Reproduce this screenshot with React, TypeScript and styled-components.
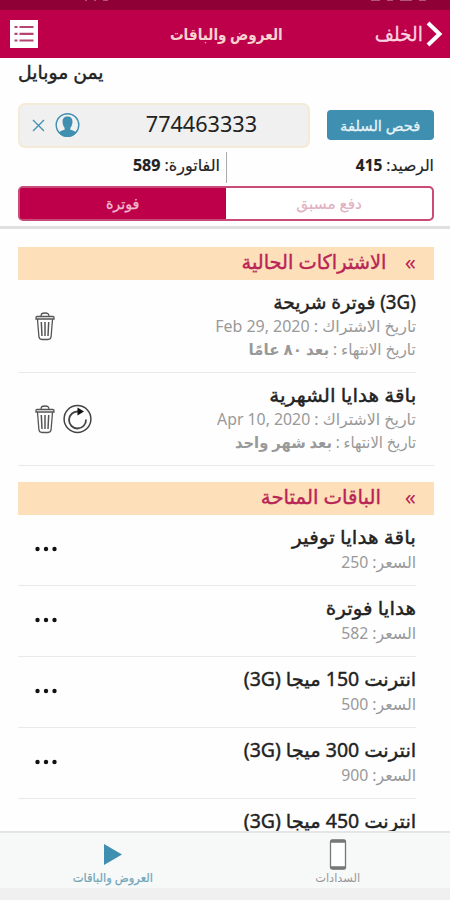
import React from "react";
import styled, { createGlobalStyle } from "styled-components";

const Global = createGlobalStyle`
  * { box-sizing: border-box; }
  body { margin: 0; background: #fff; overflow: hidden; }
  button { border: 0; padding: 0; background: none; font: inherit; color: inherit; }
`;

const crimson = "#be004b";
const blue = "#3f8fb0";

const Screen = styled.main`
  width: 450px;
  height: 900px;
  display: flex;
  flex-direction: column;
  overflow: hidden;
  background: #fefefe;
  color: #222;
  font-family: "Noto Sans", "DejaVu Sans", sans-serif;
`;

const Label = styled.span<{
  $size: number;
  $x?: number;
  $origin?: string;
  $color?: string;
  $bold?: boolean;
  $stroke?: number;
}>`
  display: inline-block;
  white-space: nowrap;
  font-size: ${(p) => p.$size}px;
  font-weight: ${(p) => (p.$bold ? 700 : 400)};
  color: ${(p) => p.$color ?? "inherit"};
  -webkit-text-stroke: ${(p) => p.$stroke ?? 0}px currentColor;
  transform: scaleX(${(p) => p.$x ?? 1});
  transform-origin: ${(p) => p.$origin ?? "right"};
`;

const StatusBar = styled.div`
  height: 10px;
  flex: none;
  background: #8f0037;
  direction: ltr;
  display: flex;
  justify-content: space-between;
  padding: 0 24px 0 85px;
`;
const Marks = styled.div`
  display: flex;
  gap: 7px;
`;
const Mark = styled.i<{ $w: number }>`
  width: ${(p) => p.$w}px;
  height: 1px;
  background: #b05580;
`;

const Header = styled.header`
  height: 48px;
  flex: none;
  display: grid;
  grid-template-columns: 1fr auto 1fr;
  align-items: center;
  padding: 0 7px 0 9px;
  background: ${crimson};
  color: #fff;
`;
const Back = styled.button`
  display: flex;
  align-items: center;
  gap: 3px;
  height: 30px;
  line-height: 30px;
`;
const MenuButton = styled.button`
  justify-self: end;
  width: 30px;
  height: 30px;
  display: flex;
`;

const Operator = styled.h1`
  margin: 0;
  height: 45px;
  flex: none;
  padding: 0 18px;
  direction: ltr;
  line-height: 28px;
  font-weight: 400;
  font-size: 16px;
`;
const SearchRow = styled.div`
  display: flex;
  justify-content: space-between;
  align-items: center;
  height: 45px;
  flex: none;
  padding: 0 16px 0 18px;
`;
const CheckButton = styled.button`
  width: 107px;
  height: 30px;
  margin-bottom: 1px;
  border-radius: 4px;
  background: ${blue};
  color: #e6f4f8;
  line-height: 27px;
  text-align: center;
`;
const NumberField = styled.div`
  width: 292px;
  height: 45px;
  direction: ltr;
  display: flex;
  align-items: center;
  padding: 0 51px 2px 11px;
  background: #f0f0f0;
  border: 2px solid #f5ead6;
  border-radius: 7px;
`;
const PhoneNumber = styled.span`
  margin-left: auto;
  line-height: 40px;
`;

const Balances = styled.div`
  display: flex;
  height: 38px;
  flex: none;
  padding: 4px 16px 3px 18px;
  line-height: 26px;
`;
const Balance = styled.div`
  width: 207px;
  &:last-child {
    width: 209px;
    border-right: 1px solid #aaa;
    padding-right: 6px;
  }
`;
const Tabs = styled.div`
  display: flex;
  height: 35px;
  flex: none;
  margin: 0 16px 5px 18px;
  border: 2px solid #c94b78;
  border-radius: 5px;
  overflow: hidden;
  background: ${crimson};
`;
const Tab = styled.button<{ $active?: boolean }>`
  flex: 1;
  height: 100%;
  line-height: 31px;
  text-align: center;
  background: ${(p) => (p.$active ? crimson : "#fff")};
  color: ${(p) => (p.$active ? "#f2bccd" : "#e3b0c2")};
`;

const List = styled.div`
  flex: 1;
  min-height: 0;
  overflow: hidden;
  border-top: 3px solid #e0e0e0;
  padding: 17.5px 16px 0 18px;
`;
const SectionTitle = styled.h2<{ $later?: boolean }>`
  margin: ${(p) => (p.$later ? "16.5px 0 0" : "0")};
  height: 33px;
  display: flex;
  gap: ${(p) => (p.$later ? 23 : 18)}px;
  padding-right: 18px;
  background: #fde0b9;
  color: #b92557;
  line-height: 29px;
  font-weight: 400;
  font-size: 16px;
`;
const Chevrons = styled.span`
  direction: ltr;
  width: 12px;
  font-size: 22px;
  text-align: right;
`;
const Row = styled.article<{ $h: number; $inset?: boolean }>`
  height: ${(p) => p.$h}px;
  display: flex;
  justify-content: space-between;
  align-items: flex-start;
  padding: 10px 18px 0 16px;
  background: linear-gradient(#e9e9e9, #e9e9e9) left bottom / calc(100% - ${(p) => (p.$inset ? 18 : 0)}px) 1px no-repeat;
`;
const Lines = styled.div`
  display: flex;
  flex-direction: column;
`;
const Line = styled.div<{ $h: number }>`
  height: ${(p) => p.$h}px;
  line-height: ${(p) => p.$h}px;
`;
const Actions = styled.div`
  direction: ltr;
  display: flex;
  align-items: center;
  gap: 7px;
  margin-top: 21px;
`;

const Nav = styled.nav`
  height: 69px;
  flex: none;
  display: flex;
  border-top: 2px solid #e4e5e5;
  border-bottom: 12px solid #f0f0f0;
  background: #f7f8f8;
`;
const NavItem = styled.button`
  flex: 1;
  display: flex;
  flex-direction: column;
  align-items: center;
  padding-top: 5px;
  line-height: 13px;
`;

const Trash = () => (
  <svg width="22" height="30" viewBox="0 0 22 30" fill="none" stroke="#555" strokeWidth="1.3">
    <path d="M7 5.500C7 2.500 8 2 11 2s4 .5 4 3.500M2 8V6.500q0-1 1-1h16q1 0 1 1V8zM3.500 8.500l1.400 17q.3 3 3.100 3h6q2.800 0 3.100-3l1.400-17" />
    <path d="M7.300 11l.7 14M11 11v14M14.700 11L14 25" strokeWidth="1.500" />
  </svg>
);
const Renew = () => (
  <svg width="29" height="30" viewBox="0 0 29 30" fill="none" stroke="#444" strokeWidth="1.500">
    <circle cx="14.500" cy="15" r="13.400" />
    <path d="M23 15.500A8.500 8.500 0 1 1 15 7.500" strokeWidth="1.800" />
    <path d="M14.500 3.500l6.500 4-6.500 4z" fill="#111" stroke="none" />
  </svg>
);
const Dots = () => (
  <svg width="24" height="6" viewBox="0 0 24 6" fill="#111">
    <circle cx="3.500" cy="3" r="2.200" />
    <circle cx="12" cy="3" r="2.200" />
    <circle cx="20.500" cy="3" r="2.200" />
  </svg>
);

const subscriptions = [
  { name: "(3G) فوترة شريحة", x: 0.985, start: "Feb 29, 2020", startX: 1.03, end: "بعد ٨٠ عامًا", endX: 0.98, renew: false },
  { name: "باقة هدايا الشهرية", x: 1.055, start: "Apr 10, 2020", startX: 1.02, end: "بعد شهر واحد", endX: 0.953, renew: true },
];
const packages = [
  { name: "باقة هدايا توفير", x: 1.06, price: 250 },
  { name: "هدايا فوترة", x: 1.05, price: 582 },
  { name: "انترنت 150 ميجا (3G)", x: 1.025, price: 500 },
  { name: "انترنت 300 ميجا (3G)", x: 1.025, price: 900 },
  { name: "انترنت 450 ميجا (3G)", x: 1.025 },
];

export default function App() {
  return (
    <Screen dir="rtl">
      <Global />
      <StatusBar>
        <Marks><Mark $w={2} /><Mark $w={2} /><Mark $w={5} /></Marks>
        <Marks><Mark $w={9} /><Mark $w={6} /><Mark $w={12} /><Mark $w={7} /></Marks>
      </StatusBar>
      <Header>
        <Back>
          <svg width="17" height="28" viewBox="0 0 17 28" fill="none" stroke="#fff" strokeWidth="4">
            <path d="M2 3l11.500 11L2 25" />
          </svg>
          <Label $size={20} $x={0.93} $stroke={0.3} $color="#f9d3e0">الخلف</Label>
        </Back>
        <Label $size={16} $x={0.85} $origin="center" $color="#f8d2cf" $bold>العروض والباقات</Label>
        <MenuButton>
          <svg width="30" height="30" viewBox="0 0 30 30">
            <path fill="#fff" d="M1 1h28v28H1z" />
            <path d="M10.500 8H24.500M10.500 14.800H24.500M10.500 21.500H24.500M5.500 8h3M5.500 14.800h3M5.500 21.500h3" stroke="#b64470" strokeWidth="2.200" />
          </svg>
        </MenuButton>
      </Header>
      <Operator><Label $size={19} $x={0.99} $stroke={0.4} $origin="left">يمن موبايل</Label></Operator>
      <SearchRow>
        <CheckButton><Label $size={14} $x={1.05} $stroke={0.3} $origin="center">فحص السلفة</Label></CheckButton>
        <NumberField>
          <svg width="50" height="26" viewBox="0 0 50 26" fill="none" stroke={blue}>
            <path d="M2 8l11 11M13 8L2 19" strokeWidth="1.300" />
            <circle cx="36.500" cy="13" r="11.300" strokeWidth="1.400" />
            <path fill={blue} stroke="none" d="M36.500 4.500c3.800 0 5.300 2.600 4.900 6.200-.3 2.700-1.300 4-2 5v2c2.500.8 4.900 1.600 6 3a11.300 11.300 0 0 1-17.800 0c1.100-1.400 3.500-2.200 6-3v-2c-.7-1-1.700-2.300-2-5-.4-3.600 1.100-6.200 4.900-6.200z" />
          </svg>
          <PhoneNumber><Label $size={21} $x={1.03}>774463333</Label></PhoneNumber>
        </NumberField>
      </SearchRow>
      <Balances>
        <Balance><Label $size={16} $x={0.965} $stroke={0.2}>الرصيد: <b>415</b></Label></Balance>
        <Balance><Label $size={16} $stroke={0.2}>الفاتورة: <b>589</b></Label></Balance>
      </Balances>
      <Tabs>
        <Tab><Label $size={15} $x={1.02} $stroke={0.2} $origin="center">دفع مسبق</Label></Tab>
        <Tab $active><Label $size={15} $x={0.95} $stroke={0.3} $origin="center">فوترة</Label></Tab>
      </Tabs>
      <List>
        <SectionTitle><Chevrons>«</Chevrons><Label $size={20} $x={0.97} $stroke={0.4}>الاشتراكات الحالية</Label></SectionTitle>
        {subscriptions.map((s) => (
          <Row $h={93} $inset={!s.renew} key={s.name}>
            <Lines>
              <Line $h={25}><Label $size={19} $x={s.x} $stroke={0.4}>{s.name}</Label></Line>
              <Line $h={23}><Label $size={15.5} $x={s.startX} $color="#999">تاريخ الاشتراك : <bdi>{s.start}</bdi></Label></Line>
              <Line $h={22}><Label $size={15.5} $x={s.endX} $color="#999">تاريخ الانتهاء : <b>{s.end}</b></Label></Line>
            </Lines>
            <Actions><Trash />{s.renew && <Renew />}</Actions>
          </Row>
        ))}
        <SectionTitle $later><Chevrons>«</Chevrons><Label $size={20} $x={0.985} $stroke={0.4}>الباقات المتاحة</Label></SectionTitle>
        {packages.map((p) => (
          <Row $h={71} $inset key={p.name}>
            <Lines>
              <Line $h={25}><Label $size={19} $x={p.x} $stroke={0.4}>{p.name}</Label></Line>
              {p.price && <Line $h={24}><Label $size={16} $x={0.985} $color="#999">السعر: {p.price}</Label></Line>}
            </Lines>
            {p.price && <Actions><Dots /></Actions>}
          </Row>
        ))}
      </List>
      <Nav>
        <NavItem>
          <svg width="18" height="33" viewBox="0 0 18 33">
            <rect x="1.500" y="2" width="15" height="29" rx="2" fill="#fff" stroke="#777" strokeWidth="1.300" />
            <path d="M1.500 3.300h15M1.500 29.700h15" stroke="#777" strokeWidth="3" />
          </svg>
          <Label $size={12} $x={0.95} $origin="center" $color="#999">السدادات</Label>
        </NavItem>
        <NavItem>
          <svg width="18" height="33" viewBox="0 0 18 33"><path d="M0 6l18 10.500L0 27z" fill={blue} /></svg>
          <Label $size={12} $x={0.96} $stroke={0.2} $origin="center" $color="#6fa6b8">العروض والباقات</Label>
        </NavItem>
      </Nav>
    </Screen>
  );
}
